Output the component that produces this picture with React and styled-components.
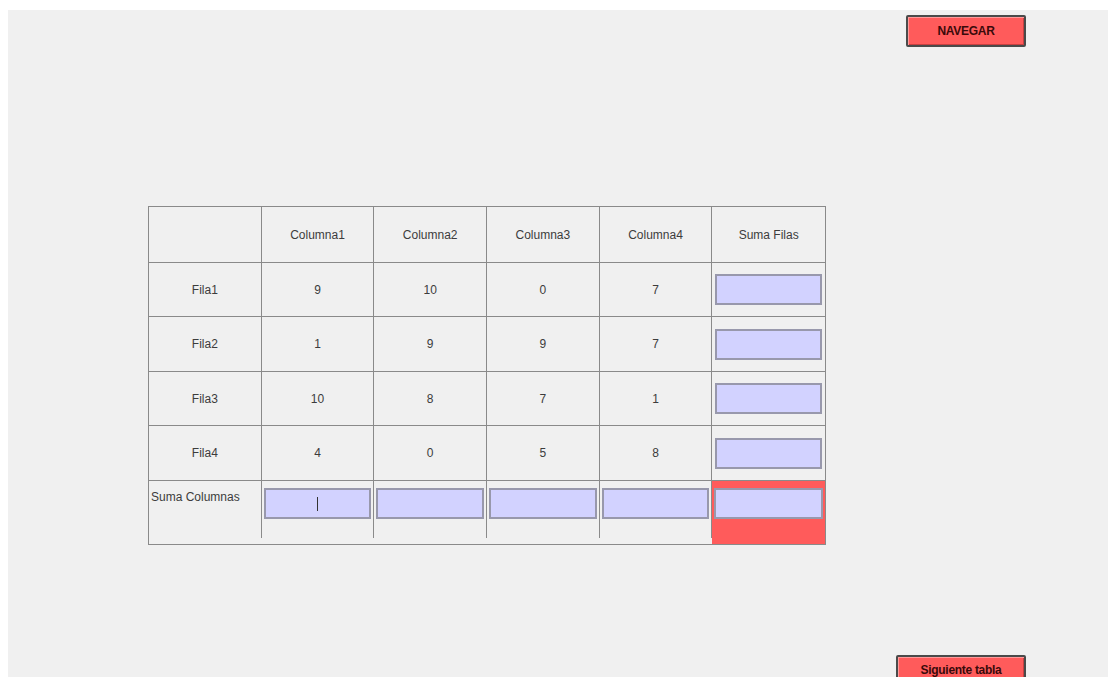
import React from "react";
import styled, { createGlobalStyle } from "styled-components";

const Global = createGlobalStyle`
  html, body { margin: 0; padding: 0; background: #ffffff; }
  body { font-family: "Liberation Sans", Arial, sans-serif; }
`;

const Panel = styled.div`
  margin: 10px 0 0 8px;
  height: 667px;
  background: #f0f0f0;
  display: flex;
  flex-direction: column;
  box-sizing: border-box;
  overflow: hidden;
`;

const Bar = styled.div`
  display: flex;
  justify-content: flex-end;
  padding: ${(p) => (p.$top ? "5px 82px 0 0" : "0 82px 0 0")};
  margin-top: ${(p) => (p.$top ? "0" : "auto")};
  margin-bottom: ${(p) => (p.$top ? "0" : "-8px")};
`;

const ActionButton = styled.button`
  width: ${(p) => p.$w}px;
  height: ${(p) => p.$h}px;
  background: #ff5b5b;
  border: 2px solid #4a4a4a;
  border-radius: 2px;
  box-shadow: inset 1px 1px 0 #ff9a9a, inset -1px -1px 0 #c84040;
  color: #3a0a0a;
  font-family: "Liberation Sans", Arial, sans-serif;
  font-weight: bold;
  font-size: 12px;
  letter-spacing: -0.3px;
  padding: 0;
  cursor: pointer;
`;

const Grid = styled.div`
  margin: 159px 0 0 140px;
  width: 678px;
  display: grid;
  grid-template-columns: repeat(6, 1fr);
  grid-template-rows: 56px 54px 55px 54px 55px 63px;
  border: 1px solid #8a8a8a;
  box-sizing: border-box;
`;

const Cell = styled.div`
  display: flex;
  align-items: center;
  justify-content: center;
  font-size: 12px;
  color: #3c3c3c;
  border-right: ${(p) => (p.$lastCol ? "none" : "1px solid #8a8a8a")};
  border-bottom: 1px solid #8a8a8a;
  box-sizing: border-box;
`;

const FootCell = styled.div`
  display: flex;
  align-items: flex-start;
  justify-content: ${(p) => (p.$label ? "flex-start" : "center")};
  align-self: start;
  height: ${(p) => (p.$alert ? "100%" : "57px")};
  padding: ${(p) => (p.$label ? "9px 0 0 2px" : "7px 2px 0")};
  font-size: 12px;
  color: #3c3c3c;
  background: ${(p) => (p.$alert ? "#ff5b5b" : "transparent")};
  border-right: ${(p) => (p.$lastCol ? "none" : "1px solid #8a8a8a")};
  box-sizing: border-box;
`;

const SumBox = styled.div`
  width: 100%;
  height: 31px;
  margin: ${(p) => (p.$inRow ? "0 3px" : "0")};
  background: #d2d2ff;
  border: 2px solid #9898ac;
  box-sizing: border-box;
  display: flex;
  justify-content: center;
  align-items: center;
`;

const Caret = styled.span`
  width: 1px;
  height: 14px;
  background: #333;
`;

const headers = ["", "Columna1", "Columna2", "Columna3", "Columna4", "Suma Filas"];
const rows = [
  ["Fila1", 9, 10, 0, 7],
  ["Fila2", 1, 9, 9, 7],
  ["Fila3", 10, 8, 7, 1],
  ["Fila4", 4, 0, 5, 8],
];

export default function App() {
  return (
    <>
      <Global />
      <Panel>
        <Bar $top>
          <ActionButton $w={120} $h={32}>NAVEGAR</ActionButton>
        </Bar>
        <Grid>
          {headers.map((h, i) => (
            <Cell key={"h" + i} $lastCol={i === 5}>{h}</Cell>
          ))}
          {rows.map((r, ri) => (
            <React.Fragment key={"r" + ri}>
              {r.map((v, ci) => (
                <Cell key={ci}>{v}</Cell>
              ))}
              <Cell $lastCol>
                <SumBox $inRow />
              </Cell>
            </React.Fragment>
          ))}
          <FootCell $label>Suma Columnas</FootCell>
          {[0, 1, 2, 3].map((i) => (
            <FootCell key={"f" + i}>
              <SumBox>{i === 0 && <Caret />}</SumBox>
            </FootCell>
          ))}
          <FootCell $alert $lastCol>
            <SumBox />
          </FootCell>
        </Grid>
        <Bar>
          <ActionButton $w={130} $h={30}>Siguiente tabla</ActionButton>
        </Bar>
      </Panel>
    </>
  );
}
